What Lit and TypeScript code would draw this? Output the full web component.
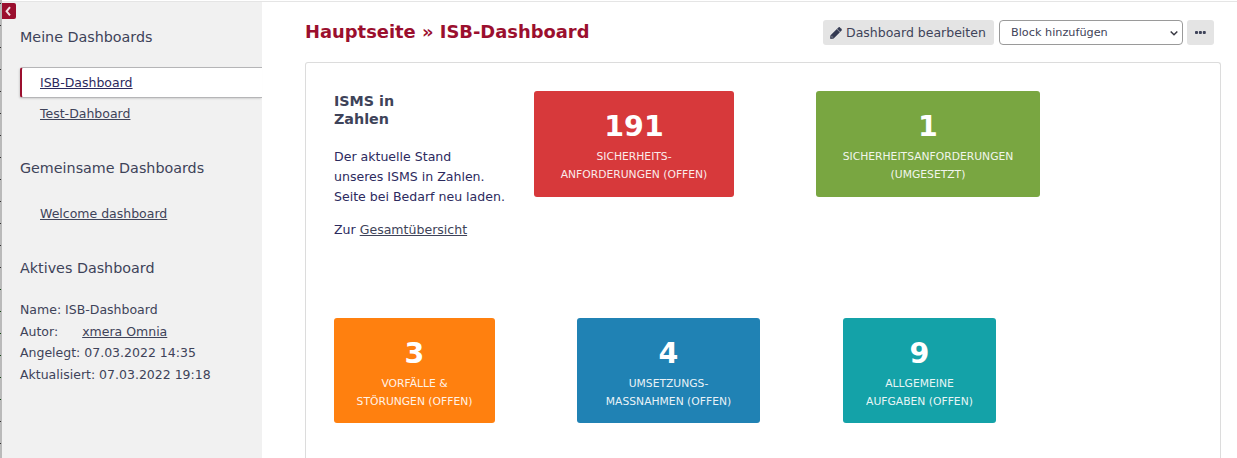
import { LitElement, html, css } from "lit";
import { customElement, property } from "lit/decorators.js";
import { classMap } from "lit/directives/class-map.js";

@customElement("stat-tile")
class StatTile extends LitElement {
  @property() value = "";
  @property({ attribute: false }) lines: string[] = [];

  static styles = css`
    :host {
      display: block;
      box-sizing: border-box;
      height: 106px;
      padding-top: 18px;
      border-radius: 3px;
      color: #fff;
      text-align: center;
    }
    .value {
      font-size: 28.5px;
      font-weight: bold;
      line-height: 36px;
      height: 39px;
    }
    .line {
      font-size: 10.75px;
      line-height: 18px;
      opacity: 0.9;
      white-space: nowrap;
    }
  `;

  render() {
    return html`<div class="value">${this.value}</div>
      ${this.lines.map((l) => html`<div class="line">${l}</div>`)}`;
  }
}

@customElement("dashboard-sidebar")
class DashboardSidebar extends LitElement {
  static styles = css`
    :host {
      display: block;
      box-sizing: border-box;
      position: relative;
      background: #f1f1f1;
      padding: 25px 0 0 18px;
      color: #3e4359;
      font-size: 12.5px;
    }
    .toggle {
      position: absolute;
      left: 0;
      top: 1px;
      width: 14px;
      height: 16px;
      border-radius: 0 2px 2px 0;
      background: #9b0f2e;
      display: flex;
    }
    h3 {
      margin: 29px 0 20px;
      font-size: 14.3px;
      font-weight: normal;
      line-height: 20px;
    }
    h3.first {
      margin-top: 0;
    }
    .item {
      box-sizing: border-box;
      height: 31px;
      padding-left: 20px;
      line-height: 31px;
    }
    .item.active {
      padding-left: 18px;
      line-height: 29px;
      background: #fff;
      border: 1px solid #b5b5b7;
      border-left: 2px solid #9b0f2e;
      border-right: 0;
      border-radius: 3px 0 0 3px;
      box-shadow: -1px 1px 2px rgba(0, 0, 0, 0.13);
      color: #2c2a5e;
    }
    .link {
      text-decoration: underline;
    }
    .details {
      margin-top: 21px;
      line-height: 21.6px;
      white-space: nowrap;
    }
    .author {
      margin-left: 24px;
    }
  `;

  private item(label: string, active = false) {
    return html`<div class=${classMap({ item: true, active })}><span class="link">${label}</span></div>`;
  }

  render() {
    return html`
      <div class="toggle">
        <svg width="14" height="16" viewBox="0 0 14 16">
          <path d="M8 4.2 L4.6 8.3 L8 12.4" fill="none" stroke="#f3dfe4" stroke-width="2" />
        </svg>
      </div>
      <h3 class="first">Meine Dashboards</h3>
      ${this.item("ISB-Dashboard", true)} ${this.item("Test-Dahboard")}
      <h3>Gemeinsame Dashboards</h3>
      ${this.item("Welcome dashboard")}
      <h3>Aktives Dashboard</h3>
      <div class="details">
        <div>Name: ISB-Dashboard</div>
        <div>Autor:<span class="link author">xmera Omnia</span></div>
        <div>Angelegt: 07.03.2022 14:35</div>
        <div>Aktualisiert: 07.03.2022 19:18</div>
      </div>
    `;
  }
}

@customElement("app-root")
class AppRoot extends LitElement {
  static styles = css`
    :host {
      display: block;
      height: 458px;
      overflow: hidden;
      background: #fff;
      font-family: "DejaVu Sans", sans-serif;
      color: #3e4359;
      font-size: 12.5px;
    }
    .page {
      display: grid;
      grid-template-columns: 2px 260px 1fr;
      height: 458px;
    }
    .edge {
      grid-row: 1;
      grid-column: 1;
      background: #bababa;
    }
    .edge svg {
      display: block;
    }
    .frame {
      grid-row: 1;
      grid-column: 2 / 4;
      margin-top: 1px;
      border-top: 1px solid #e5e5e5;
    }
    dashboard-sidebar {
      grid-row: 1;
      grid-column: 2;
      margin-top: 2px;
    }
    .right {
      grid-row: 1;
      grid-column: 3;
      min-width: 0;
      display: flex;
      flex-direction: column;
      padding: 20px 16px 0 43px;
    }
    header {
      display: flex;
      align-items: center;
      height: 25px;
      padding-right: 7px;
    }
    h2 {
      margin: 0;
      padding-bottom: 2px;
      flex: 1;
      font-size: 17.9px;
      line-height: 24px;
      color: #9b0f2e;
    }
    .btn {
      box-sizing: border-box;
      height: 25px;
      display: flex;
      align-items: center;
      background: #e4e4e4;
      border-radius: 3px;
    }
    .edit {
      width: 171px;
      padding-left: 7px;
      gap: 4px;
      white-space: nowrap;
    }
    .select {
      box-sizing: border-box;
      width: 184px;
      height: 25px;
      margin: 0 4px 0 5px;
      padding: 0 3px 0 11px;
      display: flex;
      align-items: center;
      justify-content: space-between;
      border: 1px solid #9a9a9a;
      border-radius: 4px;
      font-size: 11.25px;
    }
    .more {
      width: 27px;
      justify-content: center;
    }
    .board {
      box-sizing: border-box;
      flex: 1;
      margin-top: 17px;
      border: 1px solid #dcdcdc;
      border-bottom: 0;
      border-radius: 3px 3px 0 0;
      padding: 28px 28px 0;
    }
    .row {
      display: flex;
      align-items: flex-start;
    }
    .row.top {
      height: 227px;
    }
    .intro {
      width: 200px;
      color: #2c2a5e;
      white-space: nowrap;
    }
    h4 {
      margin: 1px 0 19px;
      font-size: 14.3px;
      line-height: 18px;
      color: #3e4359;
    }
    p {
      margin: 0 0 13px;
      line-height: 20px;
      font-size: 12.55px;
    }
    .link {
      color: #3e4359;
      text-decoration: underline;
    }
    .red { width: 200px; background: #d7393b; }
    .green { width: 224px; margin-left: 82px; background: #79a641; }
    .orange { width: 161px; height: 105px; background: #ff800f; }
    .blue { width: 183px; height: 105px; margin-left: 82px; background: #2082b4; }
    .teal { width: 153px; height: 105px; margin-left: 83px; background: #14a2a8; }
  `;

  render() {
    const ticks = Array.from({ length: 21 }, (_, i) => 3 + i * 22);
    const isGreen = (y: number) => y > 280 && y < 400;
    const marks = (ys: number[]) => ys.map((y) => `M0 ${y}h1v1h-1z`).join("");
    return html`
      <div class="page">
        <div class="edge">
          <svg width="2" height="458">
            <path d=${marks(ticks.filter((y) => !isGreen(y)))} fill="#333" />
            <path d=${marks(ticks.filter(isGreen))} fill="#134a13" />
          </svg>
        </div>
        <div class="frame"></div>
        <dashboard-sidebar></dashboard-sidebar>
        <div class="right">
          <header>
            <h2>Hauptseite » ISB-Dashboard</h2>
            <div class="btn edit">
              <svg width="12" height="12" viewBox="-16 -16 544 544">
                <path fill="#343a52" stroke="#343a52" stroke-width="24" d="M497.9 142.1l-46.1 46.1c-4.7 4.7-12.3 4.7-17 0l-111-111c-4.7-4.7-4.7-12.3 0-17l46.1-46.1c18.7-18.7 49.1-18.7 67.9 0l60.1 60.1c18.8 18.7 18.8 49.1 0 67.9zM284.2 99.8L21.6 362.4.4 483.9c-2.9 16.4 11.4 30.6 27.8 27.8l121.5-21.3 262.6-262.6c4.7-4.7 4.7-12.3 0-17l-111-111c-4.8-4.7-12.4-4.7-17.1 0zM88 424h48v36.3l-64.5 11.3-31.1-31.1L51.7 376H88v48z" />
              </svg>
              <span>Dashboard bearbeiten</span>
            </div>
            <div class="select">
              <span>Block hinzufügen</span>
              <svg width="10" height="10" viewBox="0 0 10 10">
                <path d="M1.7 3.5L5 6.8 8.3 3.5" fill="none" stroke="#3a3a44" stroke-width="1.5" />
              </svg>
            </div>
            <div class="btn more">
              <svg width="11" height="3" viewBox="0 0 11 3">
                <rect x="0" width="3" height="3" rx="0.9" fill="#3e4359" />
                <rect x="3.9" width="3" height="3" rx="0.9" fill="#3e4359" />
                <rect x="7.8" width="3" height="3" rx="0.9" fill="#3e4359" />
              </svg>
            </div>
          </header>
          <div class="board">
            <div class="row top">
              <div class="intro">
                <h4>ISMS in<br />Zahlen</h4>
                <p>Der aktuelle Stand<br />unseres ISMS in Zahlen.<br />Seite bei Bedarf neu laden.</p>
                <p>Zur <span class="link">Gesamtübersicht</span></p>
              </div>
              <stat-tile class="red" value="191" .lines=${["SICHERHEITS-", "ANFORDERUNGEN (OFFEN)"]}></stat-tile>
              <stat-tile class="green" value="1" .lines=${["SICHERHEITSANFORDERUNGEN", "(UMGESETZT)"]}></stat-tile>
            </div>
            <div class="row">
              <stat-tile class="orange" value="3" .lines=${["VORFÄLLE &", "STÖRUNGEN (OFFEN)"]}></stat-tile>
              <stat-tile class="blue" value="4" .lines=${["UMSETZUNGS-", "MASSNAHMEN (OFFEN)"]}></stat-tile>
              <stat-tile class="teal" value="9" .lines=${["ALLGEMEINE", "AUFGABEN (OFFEN)"]}></stat-tile>
            </div>
          </div>
        </div>
      </div>
    `;
  }
}
